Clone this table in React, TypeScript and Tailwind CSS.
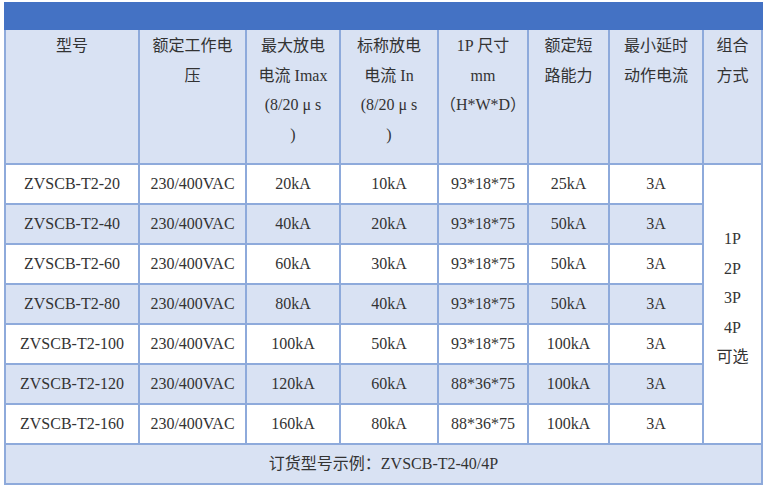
const headers: string[][] = [
  ["型号"],
  ["额定工作电", "压"],
  ["最大放电", "电流 Imax", "(8/20 μ s", ")"],
  ["标称放电", "电流 In", "(8/20 μ s", ")"],
  ["1P 尺寸", "mm", "（H*W*D）"],
  ["额定短", "路能力"],
  ["最小延时", "动作电流"],
  ["组合", "方式"],
];

const rows = [
  ["ZVSCB-T2-20", "230/400VAC", "20kA", "10kA", "93*18*75", "25kA", "3A"],
  ["ZVSCB-T2-40", "230/400VAC", "40kA", "20kA", "93*18*75", "50kA", "3A"],
  ["ZVSCB-T2-60", "230/400VAC", "60kA", "30kA", "93*18*75", "50kA", "3A"],
  ["ZVSCB-T2-80", "230/400VAC", "80kA", "40kA", "93*18*75", "50kA", "3A"],
  ["ZVSCB-T2-100", "230/400VAC", "100kA", "50kA", "93*18*75", "100kA", "3A"],
  ["ZVSCB-T2-120", "230/400VAC", "120kA", "60kA", "88*36*75", "100kA", "3A"],
  ["ZVSCB-T2-160", "230/400VAC", "160kA", "80kA", "88*36*75", "100kA", "3A"],
];

export default function App() {
  return (
    <div
      className="h-[490px] w-[765px] bg-white pl-[4px] pt-[2px] text-[16px] text-[#333333]"
      style={{ fontFamily: '"Liberation Serif", "Noto Sans CJK SC", serif' }}
    >
      <div className="h-[28px] w-[759px] bg-[#4472c4]" />
      <div className="grid w-[759px] grid-cols-[132px_105px_92px_96px_88px_79px_92px_57px] grid-rows-[133px_repeat(8,38px)] gap-[2px] bg-[#8eaadb] px-[2px] pb-[2px]">
        {headers.map((lines, i) => (
          <div key={i} className="bg-[#d9e2f3] pt-[1px] text-center leading-[29.5px]">
            {lines.map((line, j) => (
              <div key={j} className="whitespace-nowrap">
                {line}
              </div>
            ))}
          </div>
        ))}

        {rows.map((row, r) => (
          <div key={r} className="contents">
            {row.map((cell, c) => (
              <div
                key={c}
                className={`flex items-center justify-center whitespace-nowrap ${
                  r % 2 === 0 ? "bg-white" : "bg-[#d9e2f3]"
                }`}
                style={{ gridRow: r + 2, gridColumn: c + 1 }}
              >
                {cell}
              </div>
            ))}
          </div>
        ))}

        <div className="col-start-8 row-span-7 row-start-2 flex flex-col items-center justify-center bg-white pb-[12px] leading-[29.5px]">
          <span>1P</span>
          <span>2P</span>
          <span>3P</span>
          <span>4P</span>
          <span>可选</span>
        </div>

        <div className="col-span-8 flex items-center justify-center bg-[#d9e2f3] whitespace-nowrap">
          订货型号示例：ZVSCB-T2-40/4P
        </div>
      </div>
    </div>
  );
}
